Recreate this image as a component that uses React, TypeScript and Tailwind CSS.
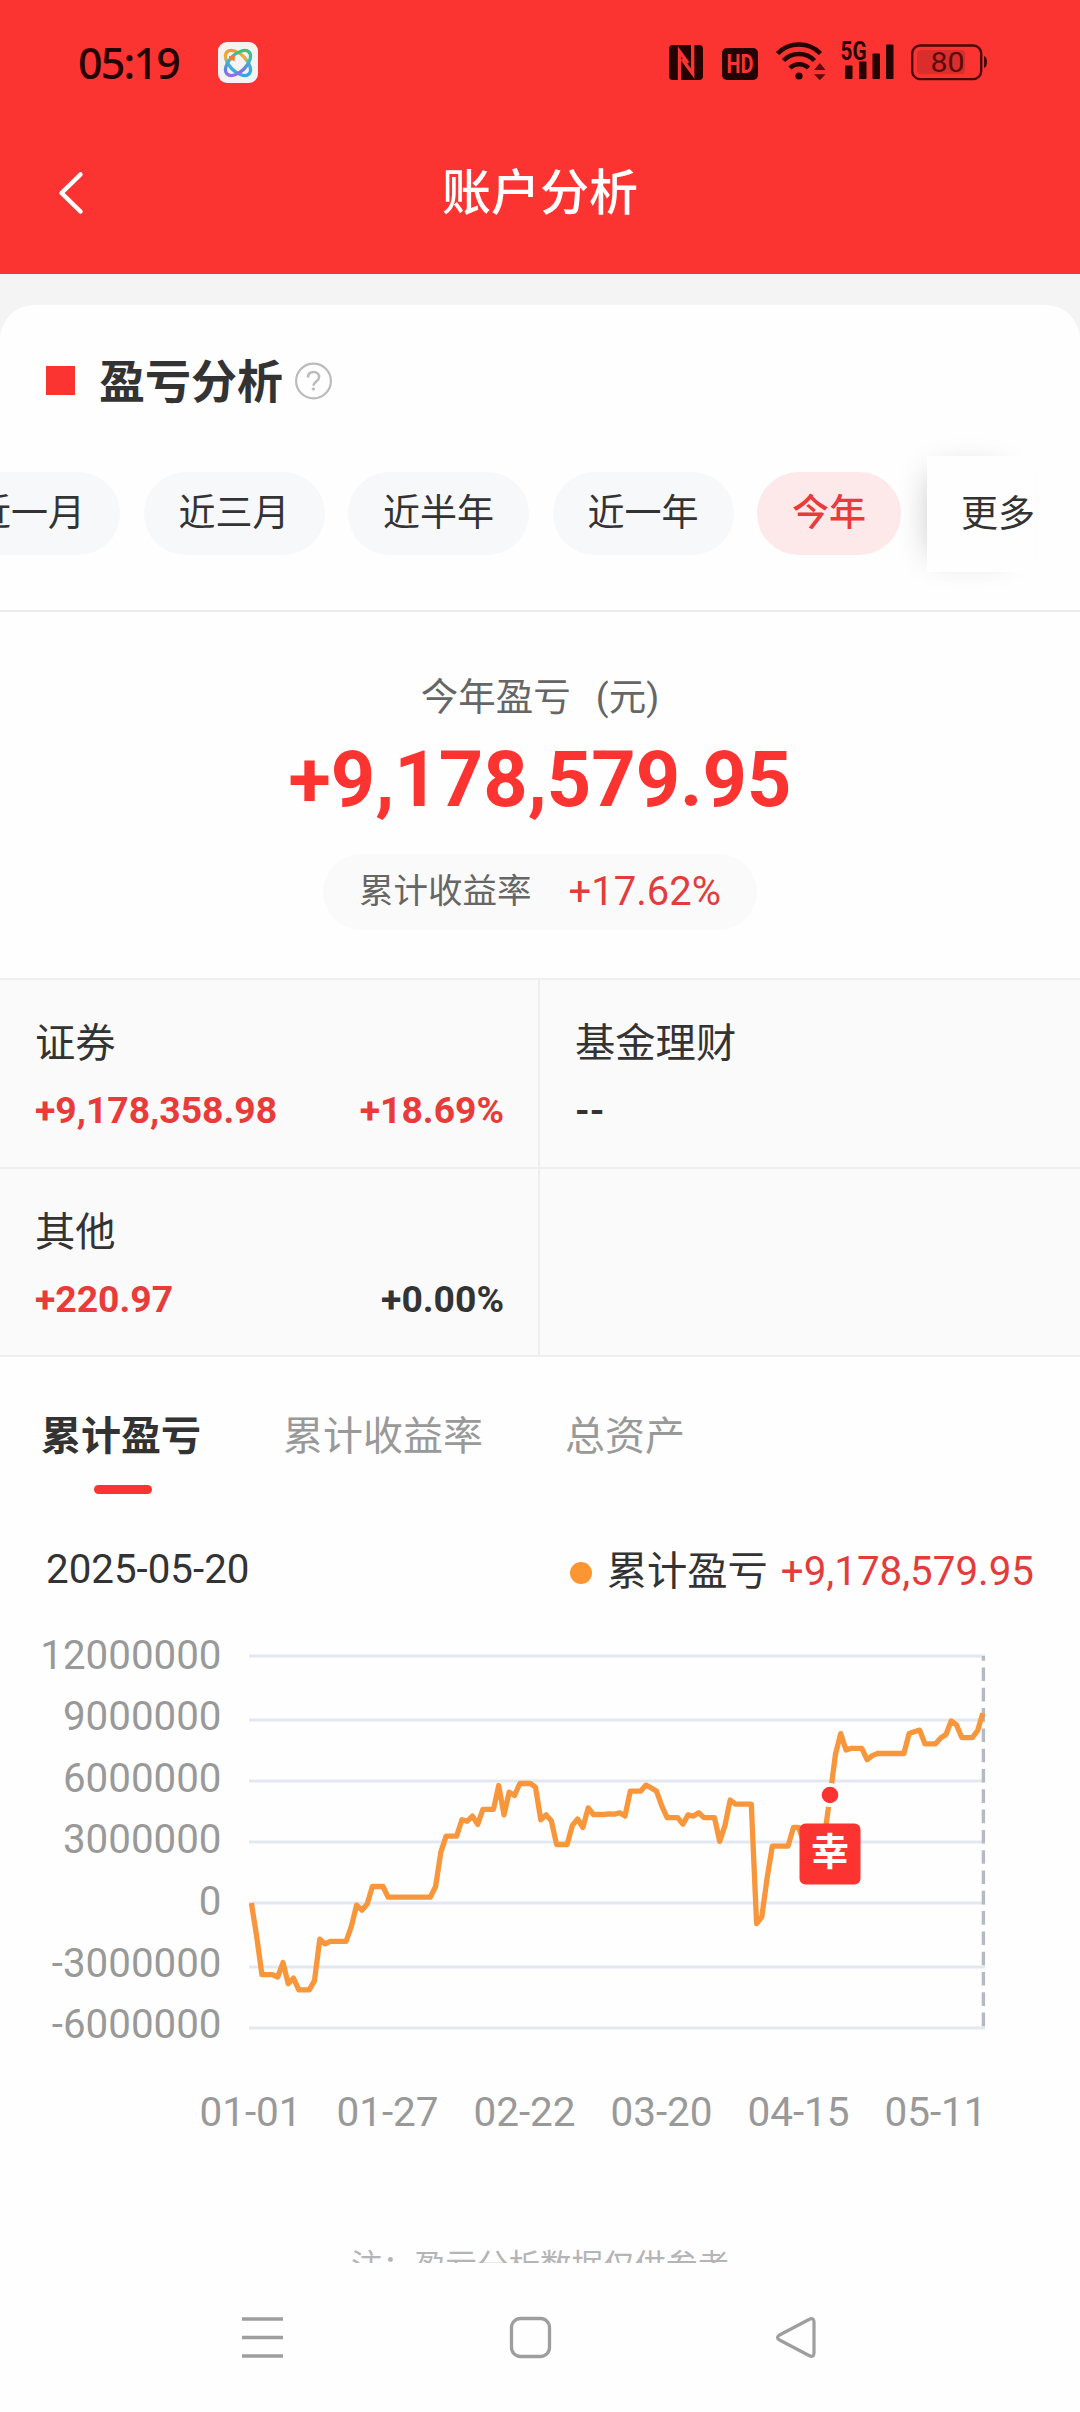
import { useState } from "react";
import clsx from "clsx";

interface Holding {
  name: string;
  amount: string;
  rate?: string;
  up?: boolean;
  rateUp?: boolean;
}

const ranges = ["近一月", "近三月", "近半年", "近一年", "今年"];

const holdings: (Holding | null)[] = [
  { name: "证券", amount: "+9,178,358.98", rate: "+18.69%", up: true, rateUp: true },
  { name: "基金理财", amount: "--" },
  { name: "其他", amount: "+220.97", rate: "+0.00%", up: true },
  null,
];

const tabs = ["累计盈亏", "累计收益率", "总资产"];

const gridLines = [
  { label: "12000000", y: 61 },
  { label: "9000000", y: 125 },
  { label: "6000000", y: 186 },
  { label: "3000000", y: 247 },
  { label: "0", y: 308 },
  { label: "-3000000", y: 372 },
  { label: "-6000000", y: 433 },
];

const dates = ["01-01", "01-27", "02-22", "03-20", "04-15", "05-11"];

// [day of the year, profit in millions]
const series: [number, number][] = [
  [0, 0], [1, -1.63], [2, -3.46], [4, -3.46], [5, -3.58], [6, -2.88], [7, -3.9], [8, -3.63],
  [9, -4.2], [11, -4.2], [12, -3.75], [13, -1.75], [14, -1.98], [15, -1.85], [18, -1.85],
  [19, -1.13], [20, -0.1], [21, -0.35], [22, -0.05], [23, 0.8], [25, 0.8], [26, 0.28],
  [34, 0.28], [35, 0.8], [36, 2.45], [37, 3.23], [39, 3.23], [40, 4.03], [41, 3.95],
  [42, 4.2], [43, 3.8], [44, 4.53], [46, 4.53], [47, 5.68], [48, 4.26], [49, 5.36],
  [50, 5.2], [51, 5.78], [53, 5.78], [54, 5.6], [55, 4.03], [56, 4.26], [57, 3.98],
  [58, 2.83], [60, 2.83], [61, 3.75], [62, 4.06], [63, 3.65], [64, 4.6], [65, 4.28],
  [67, 4.28], [68, 4.31], [69, 4.3], [70, 4.36], [71, 4.2], [72, 5.41], [74, 5.41],
  [75, 5.7], [76, 5.56], [77, 5.4], [78, 4.7], [79, 4.13], [81, 4.13], [82, 3.81],
  [83, 4.26], [84, 4.2], [85, 4.36], [86, 4.13], [88, 4.13], [89, 2.98], [90, 3.75],
  [91, 4.98], [92, 4.78], [95, 4.78], [96, -1], [97, -0.67], [98, 1.2], [99, 2.75],
  [102, 2.75], [103, 3.65], [104, 3.65], [105, 2.9], [108, 2.9], [109, 3.4], [110, 5.23],
  [111, 7.2], [112, 8.19], [113, 7.4], [114, 7.48], [116, 7.48], [117, 6.93], [118, 7.13],
  [119, 7.23], [124, 7.23], [125, 8.19], [127, 8.36], [128, 7.7], [130, 7.7], [131, 7.98],
  [132, 8.15], [133, 8.8], [134, 8.61], [135, 8], [137, 8], [138, 8.33], [139, 9.18],
];

const toX = (day: number) => 251.4 + day * 5.262;
const toY = (value: number) => 308 - value * 20.68;

function StatusBar() {
  return (
    <div className="flex h-[110px] items-center pt-[14px] pl-[78px] text-[#250303]">
      <span className="w-[140px] font-['Noto_Sans'] text-[43px] leading-none font-medium tracking-[-1.8px]">05:19</span>
      <svg width="40" height="41" viewBox="0 0 40 41" fill="none">
        <defs>
          <linearGradient id="ringA" x1="8" y1="8" x2="32" y2="33" gradientUnits="userSpaceOnUse">
            <stop offset="0" stopColor="#f08a3c" />
            <stop offset="0.35" stopColor="#e9b13c" />
            <stop offset="0.6" stopColor="#38b3d8" />
            <stop offset="1" stopColor="#3c9be8" />
          </linearGradient>
          <linearGradient id="ringB" x1="32" y1="8" x2="8" y2="33" gradientUnits="userSpaceOnUse">
            <stop offset="0" stopColor="#3fc44e" />
            <stop offset="0.45" stopColor="#3fb6c8" />
            <stop offset="0.7" stopColor="#6b7be8" />
            <stop offset="1" stopColor="#b665ee" />
          </linearGradient>
        </defs>
        <rect width="40" height="41" rx="9" fill="#f4f3f4" />
        <ellipse cx="20" cy="21" rx="15.500" ry="8.500" transform="rotate(45 20 21)" stroke="url(#ringA)" strokeWidth="3.300" />
        <ellipse cx="20" cy="21" rx="15.500" ry="8.500" transform="rotate(-45 20 21)" stroke="url(#ringB)" strokeWidth="3.300" />
        <path d="M11 14l6-.5-.5 6-2.500-1.500-3 1z" fill="#ef7f35" />
      </svg>
      <svg className="ml-[411px]" width="320" height="42" viewBox="0 0 320 42" fill="currentColor">
        {/* NFC */}
        <rect x="0" y="4" width="34" height="35" rx="4" />
        <path d="M10.500 39V10.500l8.500 11.500" fill="none" stroke="#fb3431" strokeWidth="3.400" />
        <path d="M23.700 4v28.500L13 18" fill="none" stroke="#fb3431" strokeWidth="3.400" />
        {/* HD */}
        <rect x="53" y="7" width="36" height="32" rx="5" />
        <text x="71" y="32" textAnchor="middle" fill="#fb3431" className="font-['Roboto'] text-[25px] font-bold" textLength="27" lengthAdjust="spacingAndGlyphs">HD</text>
        {/* Wi-Fi */}
        <g fill="none" stroke="currentColor" strokeWidth="4.500">
          <path d="M108.500 12.500a30 30 0 0 1 43 0" />
          <path d="M114.500 19.500a21.500 21.500 0 0 1 31 0" />
          <path d="M121 27a13 13 0 0 1 18.500 0" />
        </g>
        <circle cx="130" cy="35" r="3.600" />
        <path d="M145 29l5.800-7 5.800 7zM145 33.200h11.600l-5.800 6z" opacity="0.75" />
        {/* signal */}
        <text x="171.500" y="19" className="font-['Roboto'] text-[25px] font-bold" textLength="26" lengthAdjust="spacingAndGlyphs">5G</text>
        <rect x="176" y="24.500" width="7.500" height="13.500" rx="1" />
        <rect x="190" y="20.500" width="7.500" height="17.500" rx="1" />
        <rect x="203.500" y="12.500" width="7.500" height="25.500" rx="1" />
        <rect x="217" y="3.500" width="7.500" height="34.500" rx="1" />
        {/* battery */}
        <rect x="243.200" y="4.500" width="69" height="33.600" rx="8" fill="none" stroke="#4a0807" strokeWidth="2.400" />
        <rect x="248" y="9" width="48" height="24" rx="4" fill="#d92e2c" />
        <path d="M315 15q3 1 3 6t-3 6z" fill="#4a0807" />
        <text x="278.500" y="31" textAnchor="middle" fill="#5a0b0a" className="font-['Roboto'] text-[27px]" textLength="34" lengthAdjust="spacingAndGlyphs">80</text>
      </svg>
    </div>
  );
}

function TitleBar() {
  return (
    <div className="relative flex h-[164px] items-center justify-center pt-[3px]">
      <svg className="absolute top-[60px] left-[57px]" width="30" height="46" viewBox="0 0 30 46" fill="none">
        <path d="M23.500 4.500L4.500 23l19 18.500" stroke="#fff" strokeWidth="4.500" strokeLinecap="round" strokeLinejoin="round" />
      </svg>
      <h1 className="text-[49px] leading-none font-medium text-white">账户分析</h1>
    </div>
  );
}

function RangePicker() {
  const [active, setActive] = useState("今年");

  return (
    <div className="relative flex h-[116px] items-center">
      <div className="-ml-[61px] flex gap-[23.500px] pb-px">
        {ranges.map((range) => (
          <button
            key={range}
            onClick={() => setActive(range)}
            className={clsx(
              "h-[83px] shrink-0 rounded-full px-[35px] text-[37px] leading-none",
              range === active ? "bg-[#fee9ea] font-medium text-[#e93b39]" : "bg-[#f7f8fa] text-[#333]"
            )}
          >
            {range}
          </button>
        ))}
      </div>
      <div className="absolute top-0 left-[927px] h-[116px] w-[107px] shadow-[-12px_0_34px_-18px_rgba(0,0,0,0.28)]">
        <button className="h-full w-full bg-[#fefefe] pl-[34px] text-left text-[37px] leading-none whitespace-nowrap text-[#333]">
          更多
        </button>
      </div>
    </div>
  );
}

function Summary() {
  return (
    <div className="flex flex-col items-center pt-[60px] pb-[48px]">
      <p className="flex h-[50px] items-center gap-[25px] text-[37.500px] text-[#666]">
        <span>今年盈亏</span>
        <span>(元)</span>
      </p>
      <p className="mt-[18px] text-[77.500px] leading-[80px] font-bold text-[#fb3431]">+9,178,579.95</p>
      <div className="mt-[34px] flex h-[76px] items-center gap-[37px] rounded-full bg-[#fafafa] px-[36px]">
        <span className="text-[34.500px] text-[#666]">累计收益率</span>
        <span className="text-[40px] text-[#e23d3a]">+17.62%</span>
      </div>
    </div>
  );
}

function HoldingCell({ holding }: { holding: Holding | null }) {
  return (
    <div className="h-[188.500px] border-b-2 border-[#eeeeee] pt-[40px] pr-[34px] pl-[35px] odd:border-r-2">
      {holding && (
        <>
          <p className="text-[40.300px] leading-[48px] text-[#333]">{holding.name}</p>
          <p className="mt-[20px] flex justify-between text-[37.300px] leading-[44px] font-bold text-[#333]">
            <span className={clsx(holding.up && "text-[#e93b39]")}>{holding.amount}</span>
            {holding.rate && <span className={clsx(holding.rateUp && "text-[#e93b39]")}>{holding.rate}</span>}
          </p>
        </>
      )}
    </div>
  );
}

function ProfitChart() {
  const points = series.map(([day, value]) => `${toX(day).toFixed(1)},${toY(value).toFixed(1)}`).join(" ");

  return (
    <svg width="1080" height="555" viewBox="0 0 1080 555" className="block shrink-0">
      {gridLines.map((line, i) => (
        <g key={line.label}>
          <line x1="249" x2="985" y1={line.y} y2={line.y} stroke="#e2e7f0" strokeWidth="3" />
          <text x="221.500" y={73.500 + i * 61.650} textAnchor="end" fill="#999" fontSize="40.300">
            {line.label}
          </text>
        </g>
      ))}
      {dates.map((date, i) => (
        <text key={date} x={250.500 + i * 137} y="531" textAnchor="middle" fill="#999" fontSize="40.500">
          {date}
        </text>
      ))}

      {/* cursor on the selected day */}
      <line x1="983.400" x2="983.400" y1="61" y2="433" stroke="#b4b9c3" strokeWidth="3.400" strokeDasharray="13.600 6.700" strokeDashoffset="8.800" />
      <polyline points={points} fill="none" stroke="#f8963c" strokeWidth="5.300" strokeLinejoin="round" />

      {/* lucky day marker */}
      <circle cx="830" cy="200" r="12" fill="#fff" />
      <circle cx="830" cy="200" r="8.300" fill="#fb3431" />
      <rect x="799.500" y="228.500" width="61" height="61" rx="6" fill="#fb3431" />
      <text x="830" y="270" textAnchor="middle" fill="#fff" fontSize="38" fontWeight="700">
        幸
      </text>
    </svg>
  );
}

function NavBar() {
  return (
    <div className="h-[149px] shrink-0 bg-[#fefefe]">
      <svg width="1080" height="149" viewBox="0 0 1080 149" fill="none" stroke="#9e9e9e">
        <path d="M242 56h41M242 74.500h41M242 93h41" strokeWidth="3.600" />
        <rect x="511.500" y="55.500" width="38" height="38" rx="9" strokeWidth="3.300" />
        <path d="M809 56.500L779.500 72q-4 2.500 0 5L809 92.500q5 2.500 5-2.500V59q0-5-5-2.500z" strokeWidth="3.200" strokeLinejoin="round" />
      </svg>
    </div>
  );
}

export default function App() {
  const [tab, setTab] = useState("累计盈亏");

  return (
    <div className="flex h-[2412px] w-[1080px] flex-col overflow-hidden bg-[#f4f4f4] font-['Roboto','Noto_Sans_CJK_SC',sans-serif]">
      <header className="h-[274px] shrink-0 bg-[#fb3431]">
        <StatusBar />
        <TitleBar />
      </header>

      <main className="mt-[31px] flex h-[1958px] shrink-0 flex-col overflow-hidden rounded-t-[34px] bg-[#fefefe]">
        <section className="border-b-2 border-[#ebebeb] pb-[38px]">
          <div className="flex h-[151px] items-center pl-[46px]">
            <span className="size-[29px] bg-[#fb3431]" />
            <h2 className="ml-[24px] pt-[3px] text-[46px] leading-none font-bold text-[#333]">盈亏分析</h2>
            <svg className="ml-[12px]" width="37" height="38" viewBox="0 0 37 38" fill="none" stroke="#bbb">
              <circle cx="18.500" cy="19" r="17.400" strokeWidth="2.200" />
              <path d="M13 15.500c0-3.500 2.300-5.500 5.600-5.500s5.500 2 5.500 5c0 4.500-5.600 4.500-5.600 8.700" strokeWidth="2.500" />
              <circle cx="18.400" cy="27" r="1.300" fill="#bbb" strokeWidth="0.800" />
            </svg>
          </div>
          <RangePicker />
        </section>

        <Summary />

        <section className="grid grid-cols-2 border-t-2 border-[#eeeeee] bg-[#fafafa]">
          {holdings.map((holding, i) => (
            <HoldingCell key={i} holding={holding} />
          ))}
        </section>

        <div className="flex gap-[82px] pt-[55px] pl-[41px]">
          {tabs.map((name) => (
            <button key={name} onClick={() => setTab(name)} className="flex flex-col items-center text-[40px] leading-[50px]">
              <span className={clsx(name === tab ? "font-bold text-[#333]" : "text-[#999]")}>{name}</span>
              <span className={clsx("mt-[23px] ml-[4px] h-[9px] w-[58px] rounded-full", name === tab && "bg-[#fb3431]")} />
            </button>
          ))}
        </div>

        <div className="mt-[51px] flex h-[50px] shrink-0 items-center justify-between pr-[46px] pl-[46px] text-[40.300px] text-[#333]">
          <span>2025-05-20</span>
          <span className="flex items-center pt-[5px]">
            <i className="mr-[15px] size-[22px] rounded-full bg-[#fd9632]" />
            累计盈亏
            <span className="ml-[13px] text-[40.300px] text-[#e23d3a]">+9,178,579.95</span>
          </span>
        </div>

        <ProfitChart />

        <p className="mt-[93px] text-center text-[31.500px] leading-[48px] whitespace-nowrap text-[#b5b5b5]">注：盈亏分析数据仅供参考</p>
      </main>

      <NavBar />
    </div>
  );
}
